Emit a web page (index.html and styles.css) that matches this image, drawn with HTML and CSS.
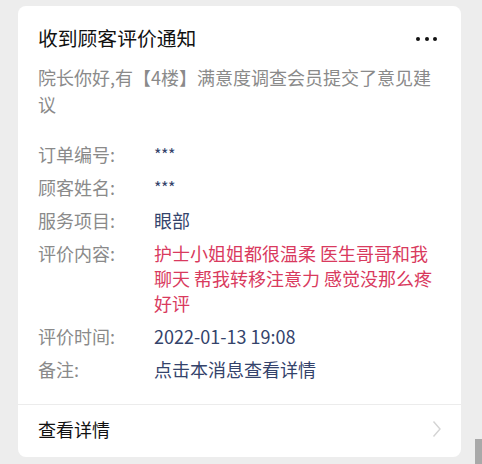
FILE: index.html
```html
<!DOCTYPE html>
<html lang="zh-CN">
<head>
<meta charset="utf-8">
<title>收到顾客评价通知</title>
<link rel="stylesheet" href="styles.css">
</head>
<body>
<div class="card">
  <div class="main">
    <div class="header">
      <div class="title">收到顾客评价通知</div>
      <div class="dots"><span></span><span></span><span></span></div>
    </div>
    <div class="subtitle">院长你好,有【4楼】满意度调查会员提交了意见建议</div>
    <div class="fields">
      <div class="row"><div class="label">订单编号:</div><div class="value stars">***</div></div>
      <div class="row"><div class="label">顾客姓名:</div><div class="value stars">***</div></div>
      <div class="row"><div class="label">服务项目:</div><div class="value">眼部</div></div>
      <div class="row"><div class="label">评价内容:</div><div class="value red">护士小姐姐都很温柔 医生哥哥和我聊天 帮我转移注意力 感觉没那么疼 好评</div></div>
      <div class="row"><div class="label">评价时间:</div><div class="value">2022-01-13 19:08</div></div>
      <div class="row"><div class="label">备注:</div><div class="value">点击本消息查看详情</div></div>
    </div>
  </div>
  <div class="footer">
    <div class="more">查看详情</div>
    <svg class="chev" width="10" height="18" viewBox="0 0 10 18"><path d="M1.5 1.5 L8 9 L1.5 16.5" fill="none" stroke="#d4d4d4" stroke-width="1.4"/></svg>
  </div>
</div>
<div class="scroll"></div>
</body>
</html>
```
FILE: styles.css
```css
html, body {
  margin: 0;
  padding: 0;
  background: #ededed;
}
body {
  padding: 6px 21px 0 18px;
  font-family: "Noto Sans CJK SC", "Noto Sans", sans-serif;
  height: 464px;
  box-sizing: border-box;
  overflow: hidden;
}
.card {
  background: #ffffff;
  border-radius: 8px;
  height: 451px;
  display: flex;
  flex-direction: column;
}
.main {
  padding: 18px 24px 22px 20px;
  border-bottom: 1px solid #ececec;
}
.header {
  display: flex;
  justify-content: space-between;
  align-items: center;
}
.title {
  font-size: 19.8px;
  line-height: 28px;
  color: #111111;
}
.dots {
  display: flex;
  gap: 4.5px;
  padding-top: 1px;
}
.dots span {
  width: 4px;
  height: 4px;
  border-radius: 50%;
  background: #111111;
}
.subtitle {
  margin-top: 12px;
  font-size: 18px;
  line-height: 27px;
  color: #8a8a8a;
}
.fields {
  margin-top: 24px;
  display: flex;
  flex-direction: column;
  gap: 8px;
}
.row {
  display: flex;
  font-size: 18px;
  line-height: 25px;
}
.label {
  width: 116px;
  flex-shrink: 0;
  color: #8a8a8a;
}
.value {
  color: #34436b;
  flex: 1;
}
.value.stars {
  font-size: 16px;
  letter-spacing: -0.5px;
}
.value.red {
  color: #d93a5e;
}
.footer {
  flex: 1;
  display: flex;
  align-items: center;
  justify-content: space-between;
  padding: 0 19px 4px 20px;
}
.more {
  font-size: 18px;
  line-height: 25px;
  color: #111111;
}
.chev {
  display: block;
}
.scroll {
  position: fixed;
  right: 0;
  bottom: 0;
  width: 7px;
  height: 25px;
  background: #a9a9a9;
}
```
